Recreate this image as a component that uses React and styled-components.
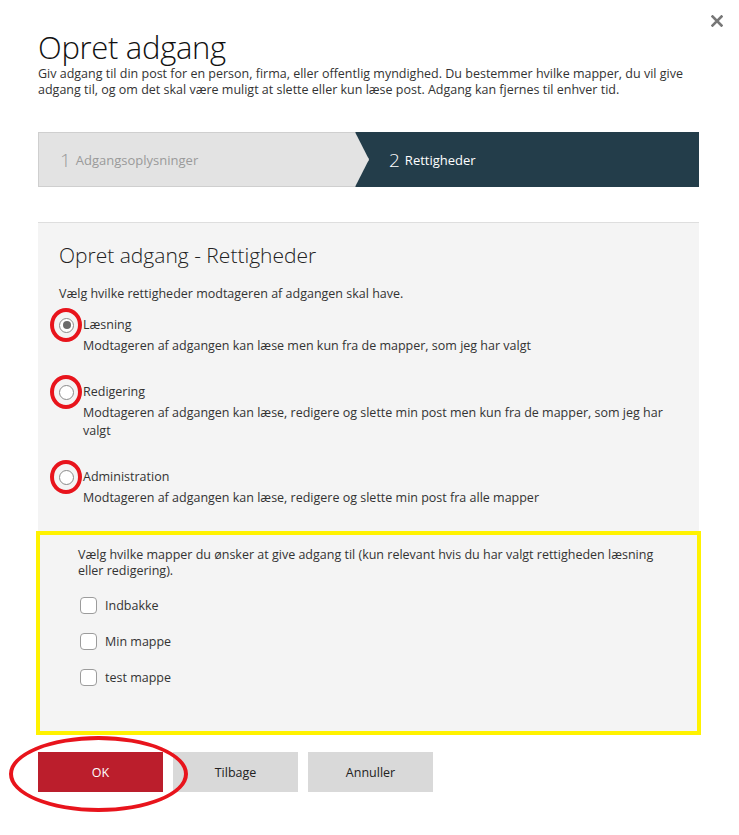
import React, { useState } from 'react';
import styled, { createGlobalStyle } from 'styled-components';

const GlobalStyle = createGlobalStyle`
  body {
    margin: 0;
    background: #ffffff;
    font-family: "Open Sans", "Noto Sans", sans-serif;
    color: #333333;
  }
`;

const Page = styled.div`
  position: relative;
  width: 739px;
  min-height: 835px;
  box-sizing: border-box;
  padding: 28px 40px 0 38px;
`;

const CloseButton = styled.button`
  position: absolute;
  top: 15px;
  right: 16px;
  width: 12px;
  height: 12px;
  padding: 0;
  border: 0;
  background: none;
  cursor: pointer;
`;

const Title = styled.h1`
  margin: 0;
  font-size: 31px;
  font-weight: 300;
  line-height: 38px;
  color: #111111;
  letter-spacing: -0.3px;
`;

const Lead = styled.p`
  margin: 0;
  font-size: 12.5px;
  line-height: 16px;
  color: #333333;
`;

const Stepper = styled.div`
  display: flex;
  height: 55px;
  margin-top: 34px;
  background: #233d4a;
`;

const Step = styled.div`
  display: flex;
  align-items: center;
  box-sizing: border-box;
  font-size: 13px;
  color: ${(p) => (p.$active ? '#ffffff' : '#9a9a9a')};
  ${(p) =>
    p.$active
      ? `flex: 1; padding-left: 20px;`
      : `width: 331px;
         padding-left: 21px;
         background: #e3e3e3;
         border: 1px solid #cfcfcf;
         clip-path: polygon(0 0, 317px 0, 331px 50%, 317px 100%, 0 100%);`}
`;

const StepNumber = styled.span`
  font-size: 19px;
  font-weight: 300;
  margin-right: 5px;
`;

const Panel = styled.div`
  margin-top: 35px;
  background: #f4f4f4;
  border-top: 1px solid #dedede;
`;

const RightsSection = styled.div`
  padding: 18px 21px 26px 21px;
`;

const PanelTitle = styled.h2`
  margin: 0;
  font-size: 21px;
  font-weight: 300;
  line-height: 28px;
  color: #222222;
`;

const Hint = styled.p`
  margin: 16px 0 12px;
  font-size: 12.5px;
  line-height: 18px;
`;

const Option = styled.div`
  & + & {
    margin-top: 27px;
  }
`;

const OptionLabel = styled.label`
  display: flex;
  align-items: center;
  font-size: 12.5px;
  line-height: 20px;
  cursor: pointer;
`;

const Radio = styled.span`
  position: relative;
  flex: none;
  width: 15px;
  height: 15px;
  margin-right: 9px;
  box-sizing: border-box;
  border: 1.5px solid #8a8a8a;
  border-radius: 50%;
  background: #ffffff;

  &::before {
    content: '';
    position: absolute;
    inset: 2.5px;
    border-radius: 50%;
    background: ${(p) => (p.$checked ? '#6b6b6b' : 'transparent')};
  }

  /* red annotation ring */
  &::after {
    content: '';
    position: absolute;
    left: -10px;
    top: -11px;
    width: 32px;
    height: 34px;
    border: 4.5px solid #e8141c;
    border-radius: 50%;
    box-sizing: border-box;
  }
`;

const OptionText = styled.div`
  margin: 2px 0 0 24px;
  font-size: 12.5px;
  line-height: 18px;
`;

const FolderSection = styled.div`
  padding: 14px 20px 46px 40px;
  outline: 4px solid #fff200;
  outline-offset: -2px;
`;

const FolderHint = styled.p`
  margin: 0 0 16px;
  font-size: 12.5px;
  line-height: 16px;
`;

const CheckRow = styled.label`
  display: flex;
  align-items: center;
  height: 20px;
  font-size: 12.5px;
  cursor: pointer;

  & + & {
    margin-top: 16px;
  }
`;

const CheckBox = styled.span`
  flex: none;
  width: 17px;
  height: 17px;
  margin: 0 8px 0 2px;
  box-sizing: border-box;
  border: 1px solid #9c9c9c;
  border-radius: 4px;
  background: ${(p) => (p.$checked ? '#dcdcdc' : '#ffffff')};
`;

const ButtonBar = styled.div`
  position: relative;
  display: flex;
  gap: 10px;
  margin-top: 19px;
`;

const Button = styled.button`
  width: 125px;
  height: 40px;
  border: 0;
  font-family: inherit;
  font-size: 12.5px;
  cursor: pointer;
  background: ${(p) => (p.$primary ? '#bb1e2c' : '#d9d9d9')};
  color: ${(p) => (p.$primary ? '#ffffff' : '#222222')};
`;

/* red annotation around the OK button */
const Highlight = styled.span`
  position: absolute;
  left: -29px;
  top: -16px;
  width: 179px;
  height: 76px;
  box-sizing: border-box;
  border: 4px solid #e8141c;
  border-radius: 50%;
  pointer-events: none;
`;

const rights = [
  {
    id: 'read',
    label: 'Læsning',
    text: 'Modtageren af adgangen kan læse men kun fra de mapper, som jeg har valgt',
  },
  {
    id: 'edit',
    label: 'Redigering',
    text: 'Modtageren af adgangen kan læse, redigere og slette min post men kun fra de mapper, som jeg har valgt',
  },
  {
    id: 'admin',
    label: 'Administration',
    text: 'Modtageren af adgangen kan læse, redigere og slette min post fra alle mapper',
  },
];

const folders = ['Indbakke', 'Min mappe', 'test mappe'];

export default function App() {
  const [right, setRight] = useState('read');
  const [checked, setChecked] = useState({});

  return (
    <Page>
      <GlobalStyle />
      <CloseButton aria-label="Luk">
        <svg width="12" height="12" viewBox="0 0 12 12">
          <path d="M1.5 1.5 L10.5 10.5 M10.5 1.5 L1.5 10.5" stroke="#777" strokeWidth="2.6" strokeLinecap="square" />
        </svg>
      </CloseButton>

      <Title>Opret adgang</Title>
      <Lead>
        Giv adgang til din post for en person, firma, eller offentlig myndighed. Du bestemmer hvilke mapper, du vil give
        <br />
        adgang til, og om det skal være muligt at slette eller kun læse post. Adgang kan fjernes til enhver tid.
      </Lead>

      <Stepper>
        <Step>
          <StepNumber>1</StepNumber>Adgangsoplysninger
        </Step>
        <Step $active>
          <StepNumber>2</StepNumber>Rettigheder
        </Step>
      </Stepper>

      <Panel>
        <RightsSection>
          <PanelTitle>Opret adgang - Rettigheder</PanelTitle>
          <Hint>Vælg hvilke rettigheder modtageren af adgangen skal have.</Hint>
          {rights.map((r) => (
            <Option key={r.id}>
              <OptionLabel onClick={() => setRight(r.id)}>
                <Radio $checked={right === r.id} />
                {r.label}
              </OptionLabel>
              <OptionText>{r.text}</OptionText>
            </Option>
          ))}
        </RightsSection>

        <FolderSection>
          <FolderHint>
            Vælg hvilke mapper du ønsker at give adgang til (kun relevant hvis du har valgt rettigheden læsning
            <br />
            eller redigering).
          </FolderHint>
          {folders.map((f) => (
            <CheckRow key={f} onClick={() => setChecked({ ...checked, [f]: !checked[f] })}>
              <CheckBox $checked={checked[f]} />
              {f}
            </CheckRow>
          ))}
        </FolderSection>
      </Panel>

      <ButtonBar>
        <Button $primary>OK</Button>
        <Button>Tilbage</Button>
        <Button>Annuller</Button>
        <Highlight />
      </ButtonBar>
    </Page>
  );
}
